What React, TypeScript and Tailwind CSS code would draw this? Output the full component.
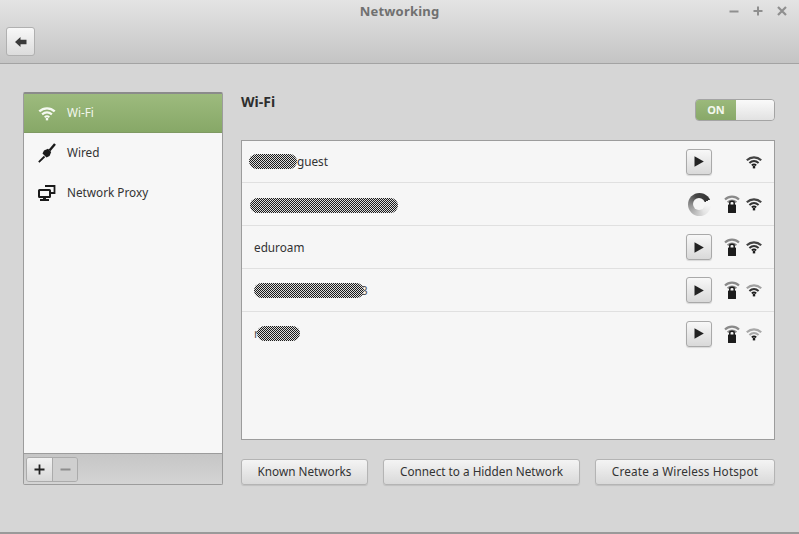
import React from "react";

const font = { fontFamily: '"Noto Sans", "Open Sans", sans-serif' };

function Wifi({ outer = "#444", mid = "#333", className = "" }: { outer?: string; mid?: string; className?: string }) {
  return (
    <svg width="16" height="14" viewBox="0 0 16 14" fill="none" className={className}>
      <path d="M0.8 5.2C5 1.4 11 1.4 15.2 5.2" stroke={outer} strokeWidth="2.2" />
      <path d="M3.4 8C6.2 5.6 9.8 5.6 12.6 8" stroke={mid} strokeWidth="2.1" />
      <path d="M5.8 10.4C7.2 9.2 8.8 9.2 10.2 10.4" stroke="#1e1e1e" strokeWidth="1.9" />
      <rect x="6.8" y="11" width="2.4" height="2.4" fill="#1e1e1e" />
    </svg>
  );
}

function LockIcon() {
  return (
    <svg width="16" height="20" viewBox="0 0 16 20" fill="none">
      <path d="M1 5.5C5 1.6 11 1.6 15 5.5" stroke="#8a8a8a" strokeWidth="2.2" />
      <path d="M3.6 8.2C6.2 5.8 9.8 5.8 12.4 8.2" stroke="#8a8a8a" strokeWidth="2" />
      <path d="M5.8 11V8.8C5.8 6.6 10.2 6.6 10.2 8.8V11" stroke="#1c1c1c" strokeWidth="1.5" />
      <rect x="4" y="10.5" width="8" height="8.5" rx="0.6" fill="#1c1c1c" />
    </svg>
  );
}

function Play() {
  return (
    <button className="w-[26px] h-[26px] shrink-0 flex items-center justify-center rounded-[3px] border border-[#a9a9a9] bg-gradient-to-b from-[#f8f8f8] to-[#d9d9d9] shadow-[0_1px_1px_rgba(0,0,0,0.12)]">
      <svg width="10" height="11" viewBox="0 0 10 11">
        <path d="M0.5 0.3L9.8 5.5L0.5 10.7Z" fill="#222" />
      </svg>
    </button>
  );
}

function Spinner() {
  return (
    <div className="w-[23px] h-[23px] shrink-0 rounded-full bg-[conic-gradient(from_70deg,#f6f6f6_0deg,#f6f6f6_25deg,#e4e4e4_80deg,#999999_190deg,#444444_270deg,#333333_355deg,#f6f6f6_356deg)] flex items-center justify-center">
      <div className="w-[12px] h-[12px] rounded-full bg-[#f6f6f6]" />
    </div>
  );
}

function Blob({ w, className = "" }: { w: number; className?: string }) {
  return (
    <span
      className={
        "relative z-10 block h-[15px] rounded-full bg-[repeating-conic-gradient(#1a1a1a_0_25%,#dcdcdc_0_50%)] bg-[length:2px_2px] " + className
      }
      style={{ width: w }}
    />
  );
}

function Row({
  children,
  action,
  lock = true,
  outer = "#444",
  mid = "#333",
  last = false,
  h = "h-[43px]",
}: {
  children: React.ReactNode;
  action: React.ReactNode;
  lock?: boolean;
  outer?: string;
  mid?: string;
  last?: boolean;
  h?: string;
}) {
  return (
    <div className={"flex items-center pr-[12px] " + h + (last ? "" : " border-b border-[#e0e0e0]")}>
      <div className="flex-1 min-w-0 flex items-center text-[11.75px] text-[#333]">{children}</div>
      <div className="w-[26px] flex justify-center">{action}</div>
      <div className="w-[16px] ml-[12px] flex justify-center">{lock ? <LockIcon /> : null}</div>
      <Wifi outer={outer} mid={mid} className="ml-[6px]" />
    </div>
  );
}

function Btn({ w, children, className = "" }: { w: string; children: React.ReactNode; className?: string }) {
  return (
    <button
      className={
        "h-[26px] rounded-[3px] border border-[#b4b4b4] bg-gradient-to-b from-[#f4f4f4] to-[#d9d9d9] text-[11.75px] text-[#333] shadow-[0_1px_1px_rgba(0,0,0,0.1)] " + w + " " + className
      }
    >
      {children}
    </button>
  );
}

export default function App() {
  return (
    <div style={font} className="w-[799px] h-[534px] flex flex-col bg-[#d6d6d6] overflow-hidden">
      <header className="h-[64px] shrink-0 border-b border-[#a3a3a3] bg-gradient-to-b from-[#e4e4e4] to-[#c4c4c4] flex flex-col">
        <div className="h-[27px] flex items-center relative">
          <div className="flex-1 text-center text-[13px] font-bold text-[#707070] tracking-[0.2px] -mt-[3px]">Networking</div>
          <div className="absolute right-[10px] top-[4px] flex gap-[10px]">
            <svg width="14" height="14" viewBox="0 0 14 14"><path d="M2.5 7.5H11.5" stroke="#8f8f8f" strokeWidth="2" /></svg>
            <svg width="14" height="14" viewBox="0 0 14 14"><path d="M2.5 7H11.5M7 2.5V11.5" stroke="#8f8f8f" strokeWidth="2" /></svg>
            <svg width="14" height="14" viewBox="0 0 14 14"><path d="M3 3L11 11M11 3L3 11" stroke="#8f8f8f" strokeWidth="2.2" /></svg>
          </div>
        </div>
        <div className="pl-[6px]">
          <button className="w-[29px] h-[29px] rounded-[3px] border border-[#b0b0b0] bg-gradient-to-b from-[#f8f8f8] to-[#dcdcdc] flex items-center justify-center">
            <svg width="12" height="10" viewBox="0 0 12 10"><path d="M0 5L5.5 0V2.8H11.5V7.2H5.5V10Z" fill="#3a3a3a" /></svg>
          </button>
        </div>
      </header>

      <main className="flex-1 flex gap-[18px] pl-[23px] pt-[28px] items-start">
        <aside className="w-[200px] h-[393px] shrink-0 flex flex-col rounded-[2px] border border-[#9c9c9c] border-t-2 border-t-[#8b8b8b] overflow-hidden">
          <div className="flex-1 bg-[#f7f7f7] text-[11.75px] text-[#333]">
            <div className="h-[39px] flex items-center pl-[14px] gap-[11px] bg-gradient-to-b from-[#9dbb7e] to-[#87a867] border-b border-[#7f9a63] text-[#f3f7ee]">
              <svg width="18" height="15" viewBox="0 0 16 14" fill="none">
                <path d="M0.8 5C5 1.2 11 1.2 15.2 5" stroke="#f6f9f2" strokeWidth="2.2" />
                <path d="M3.4 7.9C6.2 5.5 9.8 5.5 12.6 7.9" stroke="#f6f9f2" strokeWidth="2.1" />
                <path d="M5.8 10.4C7.2 9.3 8.8 9.3 10.2 10.4" stroke="#f6f9f2" strokeWidth="1.8" />
                <rect x="6.9" y="11.2" width="2.2" height="2.2" fill="#f6f9f2" />
              </svg>
              <span>Wi-Fi</span>
            </div>
            <div className="h-[40px] flex items-center pl-[14px] gap-[11px]">
              <svg width="18" height="20" viewBox="0 0 18 20" fill="none">
                <path d="M0.8 19.2L6.5 13.5" stroke="#1a1a1a" strokeWidth="1.8" />
                <path d="M4.5 10.5L8.5 14.5L11.5 13L13.2 9L10 5.8L6 7.5Z" fill="#1a1a1a" />
                <path d="M11.5 7.5L17 1" stroke="#1a1a1a" strokeWidth="2.4" />
              </svg>
              <span>Wired</span>
            </div>
            <div className="h-[40px] flex items-center pl-[14px] gap-[11px]">
              <svg width="18" height="16" viewBox="0 0 18 16" fill="none">
                <rect x="1" y="5" width="11" height="7" rx="0.5" stroke="#1a1a1a" strokeWidth="2" fill="#f7f7f7" />
                <path d="M7 1H16.5V8H13" stroke="#1a1a1a" strokeWidth="1.8" />
                <path d="M2 15H11" stroke="#1a1a1a" strokeWidth="2" />
                <rect x="5" y="12" width="3" height="2" fill="#1a1a1a" />
              </svg>
              <span>Network Proxy</span>
            </div>
          </div>
          <div className="h-[31px] shrink-0 border-t border-[#9c9c9c] bg-gradient-to-b from-[#c6c6c6] to-[#d4d4d4] flex items-center pl-[2px]">
            <div className="flex h-[25px] w-[52px] rounded-[3px] border border-[#ababab] overflow-hidden">
              <div className="w-[26px] flex items-center justify-center border-r border-[#ababab] bg-gradient-to-b from-[#f2f2f2] to-[#d8d8d8]">
                <svg width="11" height="11" viewBox="0 0 11 11"><path d="M0.5 5.5H10.5M5.5 0.5V10.5" stroke="#222" strokeWidth="1.8" /></svg>
              </div>
              <div className="flex-1 flex items-center justify-center bg-[#cfcfcf]">
                <svg width="11" height="11" viewBox="0 0 11 11"><path d="M0.5 5.5H10.5" stroke="#8e8e8e" strokeWidth="1.8" /></svg>
              </div>
            </div>
          </div>
        </aside>

        <section className="w-[534px] shrink-0 flex flex-col">
          <div className="h-[48px] flex justify-between items-start">
            <h1 className="text-[14px] font-bold text-[#2e2e2e] leading-[20px]">Wi-Fi</h1>
            <div className="mt-[7px] w-[80px] h-[22px] flex rounded-[4px] border border-[#a4a4a4] overflow-hidden">
              <div className="w-[40px] bg-gradient-to-b from-[#9bb97b] to-[#88a869] text-[#f3f7ee] text-[11px] font-bold flex items-center justify-center">ON</div>
              <div className="flex-1 bg-gradient-to-b from-[#fafafa] to-[#e2e2e2]" />
            </div>
          </div>

          <div className="h-[300px] border border-[#9c9c9c] bg-[#f6f6f6]">
            <Row h="h-[42px]" lock={false} action={<Play />}>
              <Blob w={48} className="ml-[7px]" />
              <span>guest</span>
            </Row>
            <Row action={<Spinner />}>
              <Blob w={148} className="ml-[8px] mt-[2px]" />
            </Row>
            <Row action={<Play />}>
              <span className="ml-[12px] mt-[1px]">eduroam</span>
            </Row>
            <Row action={<Play />} outer="#a0a0a0">
              <Blob w={110} className="ml-[12px]" />
              <span className="-ml-[3px] mt-[1px] text-[#555]">3</span>
            </Row>
            <Row action={<Play />} outer="#a8a8a8" mid="#a8a8a8" last>
              <span className="ml-[12px] text-[#555]">r</span>
              <Blob w={43} className="-ml-[2px]" />
            </Row>
          </div>

          <div className="mt-[19px] flex justify-between">
            <Btn w="w-[127px]">Known Networks</Btn>
            <Btn w="w-[197px]">Connect to a Hidden Network</Btn>
            <Btn w="w-[180px]" className="tracking-[0.16px]">Create a Wireless Hotspot</Btn>
          </div>
        </section>
      </main>
      <div className="h-[2px] shrink-0 bg-[#9a9a9a]" />
    </div>
  );
}
